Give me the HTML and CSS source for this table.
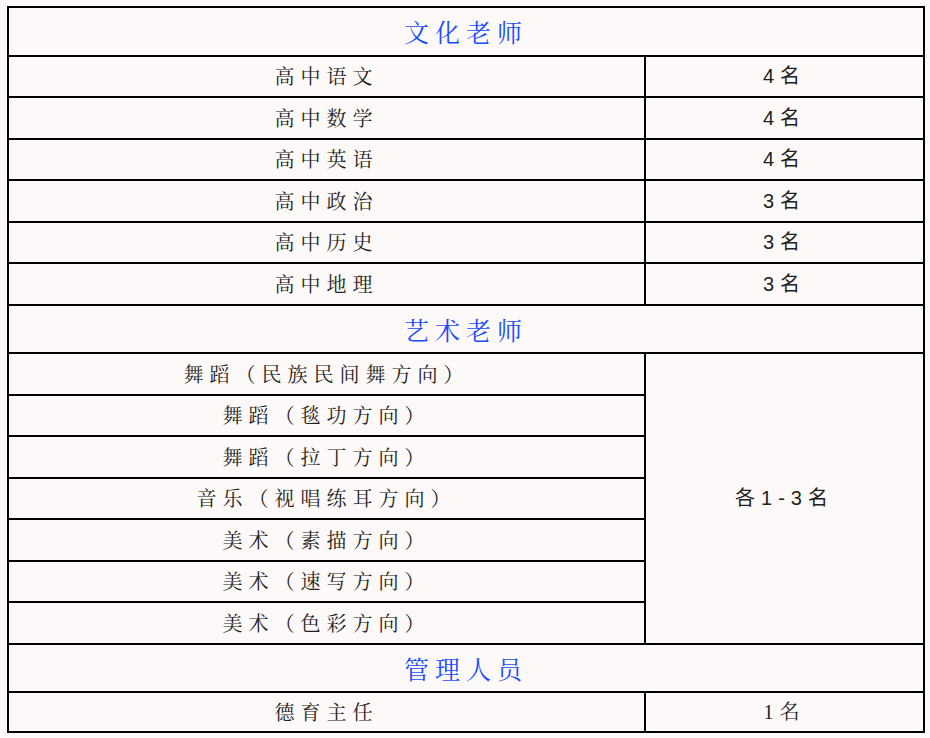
FILE: index.html
```html
<!DOCTYPE html>
<html lang="zh-CN">
<head>
<meta charset="utf-8">
<title>招聘岗位</title>
<link rel="stylesheet" href="styles.css">
</head>
<body>
<table class="jobs">
  <colgroup><col class="col-name"><col class="col-num"></colgroup>
  <tbody>
    <tr class="sec"><td colspan="2">文化老师</td></tr>
    <tr class="row"><td>高中语文</td><td class="num">4名</td></tr>
    <tr class="row"><td>高中数学</td><td class="num">4名</td></tr>
    <tr class="row"><td>高中英语</td><td class="num">4名</td></tr>
    <tr class="row"><td>高中政治</td><td class="num">3名</td></tr>
    <tr class="row"><td>高中历史</td><td class="num">3名</td></tr>
    <tr class="row"><td>高中地理</td><td class="num">3名</td></tr>
    <tr class="sec"><td colspan="2">艺术老师</td></tr>
    <tr class="row"><td>舞蹈（民族民间舞方向）</td><td class="num" rowspan="7">各1-3名</td></tr>
    <tr class="row"><td>舞蹈（毯功方向）</td></tr>
    <tr class="row"><td>舞蹈（拉丁方向）</td></tr>
    <tr class="row"><td>音乐（视唱练耳方向）</td></tr>
    <tr class="row"><td>美术（素描方向）</td></tr>
    <tr class="row"><td>美术（速写方向）</td></tr>
    <tr class="row"><td>美术（色彩方向）</td></tr>
    <tr class="sec"><td colspan="2">管理人员</td></tr>
    <tr class="row last"><td>德育主任</td><td class="num serif">1名</td></tr>
  </tbody>
</table>
</body>
</html>
```
FILE: styles.css
```css
html, body {
  margin: 0;
  padding: 0;
  background: #fdf9f8;
}
body {
  padding: 6px 7px 7px 7px;
  font-family: "Noto Serif CJK SC", "Noto Sans CJK SC", serif;
  color: #222;
}
.jobs {
  border-collapse: collapse;
  width: 916px;
  table-layout: fixed;
}
.col-name { width: 637px; }
.col-num { width: 279px; }
.jobs td {
  border: 2px solid #000;
  padding: 0;
  text-align: center;
  vertical-align: middle;
  font-size: 20px;
  letter-spacing: 6px;
  line-height: 24px;
}
.sec td {
  height: 46.5px;
  font-size: 25px;
  color: #1a4dff;
  letter-spacing: 6px;
}
.row td {
  height: 39.5px;
}
.last td {
  height: 38px;
}
.num {
  font-family: "Liberation Sans", "Noto Sans CJK SC", sans-serif;
}
.num.serif {
  font-family: "Liberation Serif", "Noto Serif CJK SC", "Noto Sans CJK SC", serif;
}
```
